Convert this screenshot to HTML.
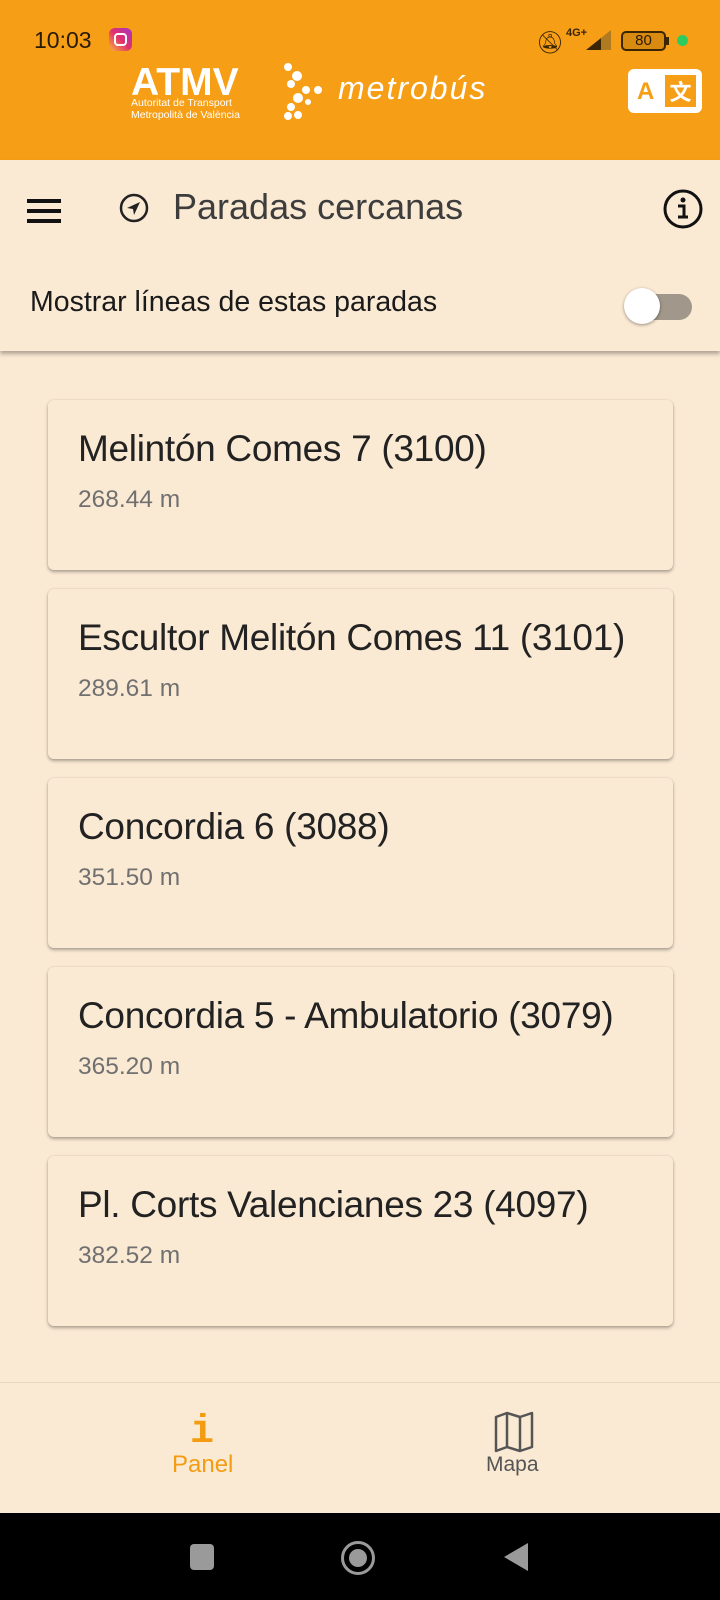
<!DOCTYPE html>
<html><head><meta charset="utf-8"><style>
*{margin:0;padding:0;box-sizing:border-box}
body{width:720px;height:1600px;background:#fae9d3;font-family:"Liberation Sans",sans-serif;position:relative;overflow:hidden}
.hdr{position:absolute;left:0;top:0;width:720px;height:160px;background:#f69e15}
.abs{position:absolute}
.tb{position:absolute;left:0;top:160px;width:720px;height:191px;background:#fae9d3;box-shadow:0 3px 4px rgba(0,0,0,.3)}
.card{position:absolute;left:48px;width:625px;height:170px;background:#fae9d3;border-radius:6px;box-shadow:0 2px 3px rgba(0,0,0,.3),0 0 2px rgba(0,0,0,.1)}
.card .t{position:absolute;left:30px;top:28px;font-size:37px;color:#222;letter-spacing:-0.3px}
.card .d{position:absolute;left:30px;top:86px;font-size:24.5px;color:#707070}
</style></head><body>
<div class="hdr">
 <div class="abs" style="left:34px;top:27px;font-size:23px;color:#2a1a05">10:03</div>
 <div class="abs" style="left:109px;top:28px;width:23px;height:23px;border-radius:6px;background:linear-gradient(45deg,#f9b43a,#e1306c,#a435c8)"><div style="position:absolute;left:5px;top:5px;width:13px;height:13px;border:2px solid #fff;border-radius:4px"></div></div>
 <div class="abs" style="left:536px;top:30px;font-size:22px;color:#3a2505">🔕︎</div>
 <div class="abs" style="left:566px;top:27px;font-size:11px;font-weight:bold;color:#3a2505">4G+</div>
 <div class="abs" style="left:586px;top:30px;width:25px;height:20px;background:linear-gradient(to right,#3a2505 60%,#b07a20 60%);clip-path:polygon(0 100%,100% 0,100% 100%)"></div>
 <div class="abs" style="left:621px;top:31px;width:45px;height:20px;border:2px solid #3a2505;border-radius:5px;font-size:15px;text-align:center;line-height:16px;color:#2a1a05;background:#d98a10">80</div>
 <div class="abs" style="left:666px;top:37px;width:3px;height:8px;background:#3a2505"></div>
 <div class="abs" style="left:677px;top:35px;width:11px;height:11px;border-radius:50%;background:#2ecc60"></div>
 <div class="abs" style="left:131px;top:61px;font-size:39px;font-weight:bold;color:#fff;letter-spacing:0px">ATMV</div>
 <div class="abs" style="left:131px;top:97px;font-size:10.5px;color:#fff;line-height:12px">Autoritat de Transport<br>Metropolità de València</div>
 <svg class="abs" style="left:282px;top:62px" width="50" height="60"><g fill="#fff"><circle cx="6" cy="5" r="4"/><circle cx="15" cy="14" r="5"/><circle cx="9" cy="22" r="4"/><circle cx="24" cy="28" r="4"/><circle cx="36" cy="28" r="4"/><circle cx="16" cy="36" r="5"/><circle cx="9" cy="45" r="4"/><circle cx="6" cy="54" r="4"/><circle cx="16" cy="53" r="4"/><circle cx="26" cy="40" r="3"/></g></svg>
 <div class="abs" style="left:338px;top:70px;font-size:32px;font-style:italic;color:#fff;letter-spacing:2px">metrobús</div>
 <div class="abs" style="left:628px;top:69px;width:74px;height:44px;background:#fff;border-radius:6px"><span style="position:absolute;left:9px;top:9px;font-size:24px;font-weight:bold;color:#f69e15">A</span><div style="position:absolute;left:37px;top:6px;width:31px;height:32px;background:#f69e15;color:#fff;font-size:22px;text-align:center;line-height:32px;font-family:'Noto Sans CJK SC',sans-serif;font-weight:bold">文</div></div>
</div>
<div class="tb">
 <div class="abs" style="left:27px;top:39px;width:34px;height:4px;background:#111;box-shadow:0 10px 0 #111,0 20px 0 #111"></div>
 <svg class="abs" style="left:118px;top:32px" width="32" height="32" viewBox="0 0 32 32"><circle cx="16" cy="16" r="13" fill="none" stroke="#222" stroke-width="2.5"/><path d="M22 10 L9 16 L15 17 L16 23 Z" fill="#222"/></svg>
 <div class="abs" style="left:173px;top:26px;font-size:36px;color:#3d3d3d">Paradas cercanas</div>
 <svg class="abs" style="left:662px;top:28px" width="42" height="42" viewBox="0 0 42 42"><circle cx="21" cy="21" r="18" fill="none" stroke="#111" stroke-width="3"/><circle cx="21" cy="12" r="2.5" fill="#111"/><path d="M16 18h6v11h4M16 29h10" stroke="#111" stroke-width="3" fill="none"/></svg>
 <div class="abs" style="left:30px;top:126px;font-size:28.5px;color:#1a1a1a">Mostrar líneas de estas paradas</div>
 <div class="abs" style="left:632px;top:134px;width:60px;height:26px;border-radius:13px;background:#a1978a"></div>
 <div class="abs" style="left:624px;top:128px;width:36px;height:36px;border-radius:50%;background:#fff;box-shadow:0 1px 3px rgba(0,0,0,.4)"></div>
</div>
<div class="card" style="top:400px"><div class="t">Melintón Comes 7 (3100)</div><div class="d">268.44 m</div></div>
<div class="card" style="top:589px"><div class="t">Escultor Melitón Comes 11 (3101)</div><div class="d">289.61 m</div></div>
<div class="card" style="top:778px"><div class="t">Concordia 6 (3088)</div><div class="d">351.50 m</div></div>
<div class="card" style="top:967px"><div class="t">Concordia 5 - Ambulatorio (3079)</div><div class="d">365.20 m</div></div>
<div class="card" style="top:1156px"><div class="t">Pl. Corts Valencianes 23 (4097)</div><div class="d">382.52 m</div></div>
<div class="abs" style="left:0;top:1382px;width:720px;height:1px;background:#e6d6c0"></div>
<div class="abs" style="left:190px;top:1410px;font-size:40px;font-weight:bold;color:#f39c12;font-family:'Liberation Mono',monospace">i</div>
<div class="abs" style="left:172px;top:1451px;font-size:24px;color:#f39c12">Panel</div>
<svg class="abs" style="left:494px;top:1411px" width="40" height="42" viewBox="0 0 40 42"><path d="M2 6 L13 2 L26 6 L38 2 L38 36 L26 40 L13 36 L2 40 Z M13 2 L13 36 M26 6 L26 40" fill="none" stroke="#555" stroke-width="2.5" stroke-linejoin="round"/></svg>
<div class="abs" style="left:486px;top:1453px;font-size:21px;color:#555">Mapa</div>
<div class="abs" style="left:0;top:1513px;width:720px;height:87px;background:#000">
 <div class="abs" style="left:190px;top:31px;width:24px;height:26px;border-radius:4px;background:#9a9a9a"></div>
 <div class="abs" style="left:341px;top:28px;width:34px;height:34px;border-radius:50%;border:3px solid #9a9a9a"></div>
 <div class="abs" style="left:349px;top:36px;width:18px;height:18px;border-radius:50%;background:#9a9a9a"></div>
 <div class="abs" style="left:504px;top:30px;width:0;height:0;border-top:14px solid transparent;border-bottom:14px solid transparent;border-right:24px solid #9a9a9a"></div>
</div>
</body></html>
